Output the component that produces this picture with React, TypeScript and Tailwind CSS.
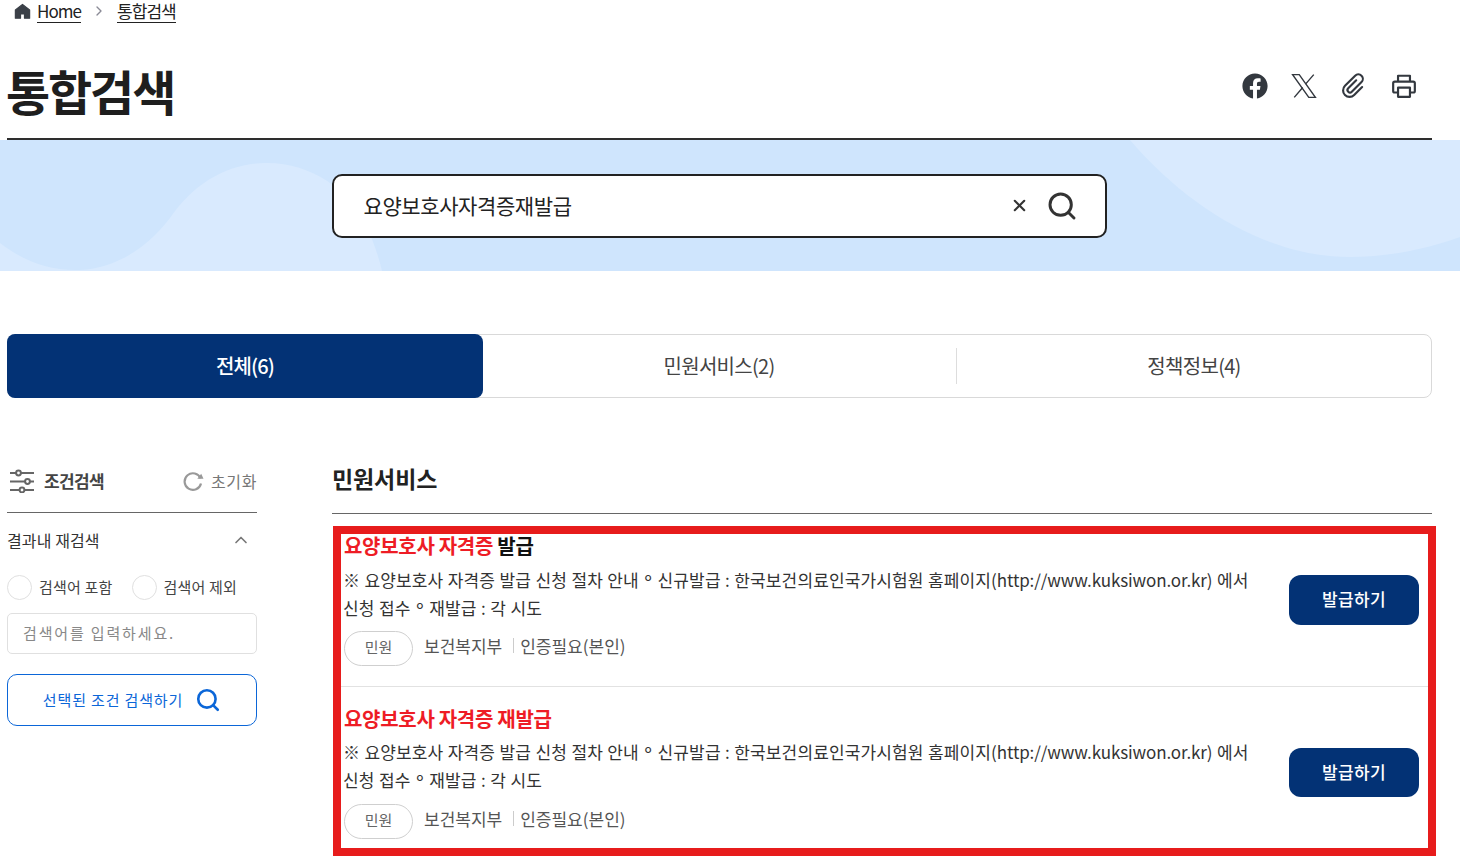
import React from "react";
import { ChevronRight, ChevronUp, Search, X } from "lucide-react";
import { FaFacebook } from "react-icons/fa";

const results = [
  { red: "요양보호사 자격증", dark: " 발급" },
  { red: "요양보호사 자격증 재발급", dark: "" },
];

function HomeIcon() {
  return (
    <svg viewBox="0 0 24 24" className="ml-[6px] mt-[2px] h-[19px] w-[19px] text-[#3b4048]" fill="currentColor" stroke="currentColor" strokeWidth="1.5" strokeLinejoin="round">
      <path d="M12 3L3 10V20.5H9.5V15H14.5V20.5H21V10Z" />
    </svg>
  );
}

function XLogo() {
  return (
    <svg viewBox="0 0 24 24" className="h-[26px] w-[26px]" fill="none" stroke="currentColor" strokeWidth="1.3" strokeLinejoin="miter">
      <path d="M1.5 1.5H7.6L22.5 22.5H16.4Z" />
      <path d="M21 1.5L13.4 10.3M10.8 13.4L3 22.5" />
    </svg>
  );
}

function ClipIcon() {
  return (
    <svg viewBox="0 0 24 24" className="mx-[-1px] h-[30px] w-[30px] rotate-45" fill="none" stroke="currentColor" strokeWidth="1.7" strokeLinecap="round">
      <path d="M10 7.5V16.5a2 2 0 0 0 4 0V5.5a3.6 3.6 0 0 0 -7.2 0V17a5.2 5.2 0 0 0 10.4 0V8" />
    </svg>
  );
}

function PrintIcon() {
  return (
    <svg viewBox="0 0 24 24" className="h-[26px] w-[26px]" fill="none" stroke="currentColor" strokeWidth="2" strokeLinejoin="round">
      <path d="M6.5 8V2.5H17.5V8" />
      <path d="M6.5 18H3.5A1.5 1.5 0 0 1 2 16.5V9.5A1.5 1.5 0 0 1 3.5 8H20.5A1.5 1.5 0 0 1 22 9.5V16.5A1.5 1.5 0 0 1 20.5 18H17.5" />
      <path d="M6.5 13.5H17.5V22H6.5Z" />
    </svg>
  );
}

function FilterIcon() {
  return (
    <svg viewBox="0 0 24 24" className="ml-[3px] h-[24px] w-[24px] text-[#666]" fill="none" stroke="currentColor" strokeWidth="2">
      <path d="M0 4H24M0 12.5H24M0 21H24" />
      <circle cx="8.5" cy="4" r="2.4" fill="white" />
      <circle cx="17.5" cy="12.5" r="2.4" fill="white" />
      <circle cx="12" cy="21" r="2.4" fill="white" />
    </svg>
  );
}

function ResetIcon() {
  return (
    <svg viewBox="0 0 22 22" className="mr-[7px] h-[22px] w-[22px]" fill="none">
      <path d="M18.6 8.4A8.3 8.3 0 1 0 19 13.5" stroke="#999999" strokeWidth="2.2" />
      <path d="M15.3 8.8L21.5 8.8L19.2 3.8Z" fill="#999999" />
    </svg>
  );
}

function Ring() {
  return <span className="mx-[1px] align-[-4px] text-[21px] leading-[0]">°</span>;
}

function ResultRow({ red, dark, last }: { red: string; dark: string; last?: boolean }) {
  return (
    <li className={`flex justify-between pl-[3px] pr-[9px] ${last ? "h-[158px]" : "h-[153px] border-b border-[#e2e2e2]"}`}>
      <div className="w-[908px]">
        <h3 className={`text-[20px] leading-[30px] font-bold tracking-[-0.3px] text-[#111] ${last ? "mt-[17px]" : "mt-[-3px]"}`}>
          <span className="text-[#ee1c25]">{red}</span>
          {dark}
        </h3>
        <div className={`ml-[-1px] text-[17px] leading-[28px] tracking-[0.12px] [word-spacing:0.5px] text-[#333] ${last ? "mt-[4px]" : "mt-[5px]"}`}>
          <p className="h-[28px] whitespace-nowrap">
            ※ 요양보호사 자격증 발급 신청 절차 안내 <Ring /> 신규발급 : 한국보건의료인국가시험원 홈페이지(
            <span className="tracking-[-0.12px]">http://www.kuksiwon.or.kr</span>) 에서
          </p>
          <p className="h-[28px] whitespace-nowrap">
            신청 접수 <Ring /> 재발급 : 각 시도
          </p>
        </div>
        <div className={`flex items-center ${last ? "mt-[10px]" : "mt-[9px]"}`}>
          <span className="flex h-[35px] w-[69px] items-center justify-center rounded-full border border-[#cfcfcf] pb-[2px] text-[15px] text-[#666]">민원</span>
          <div className="mb-[6px] flex items-center text-[17px] tracking-[0px] text-[#555]">
            <span className="ml-[11px]">보건복지부</span>
            <span className="ml-[11px] mr-[6px] h-[15px] w-px bg-[#cccccc]" />
            <span>인증필요(본인)</span>
          </div>
        </div>
      </div>
      <button className={`w-[130px] rounded-[12px] bg-[#033275] pb-[2px] text-[17px] font-medium tracking-[0.4px] text-white ${last ? "mt-[61px] h-[49px]" : "mt-[41px] h-[50px]"}`}>발급하기</button>
    </li>
  );
}

export default function App() {
  return (
    <div className="h-[857px] w-full overflow-hidden bg-white font-['Noto_Sans_CJK_KR','Noto_Sans',sans-serif] text-[#222]">
      <div className="mx-[7px] w-[1425px]">
        <nav className="flex h-[24px] items-start text-[17px] tracking-[-0.95px] text-[#222]">
          <HomeIcon />
          <a className="ml-[5px] border-b border-[#222] leading-[22px]">Home</a>
          <ChevronRight className="mx-[10px] mt-[3px] h-[16px] w-[16px] text-[#8a8a96]" />
          <a className="border-b border-[#222] leading-[22px]">통합검색</a>
        </nav>
        <div className="flex h-[116px] items-center justify-between border-b-2 border-[#2e2e2e] pt-[18px]">
          <h1 className="ml-[-1px] text-[48px] font-bold tracking-[-2.1px] text-[#1e1e1e]">통합검색</h1>
          <div className="mr-[15px] mb-[8px] flex items-center gap-[23px] text-[#33383f]">
            <FaFacebook className="h-[26px] w-[26px]" />
            <XLogo />
            <ClipIcon />
            <PrintIcon />
          </div>
        </div>
      </div>

      <section className="relative flex h-[131px] items-center justify-center overflow-hidden bg-[#cfe5fd] pr-[22px]">
        <svg className="absolute inset-0 h-full w-full" viewBox="0 0 1460 131" preserveAspectRatio="none">
          <path d="M0 103C25 122 50 131 80 130C115 128 145 110 170 78C195 42 228 24 265 23C310 22 350 50 366 85C374 103 379 118 382 131H0Z" fill="#d9eafe" />
          <path d="M1130 0C1190 70 1270 117 1350 117C1390 117 1430 108 1460 97V0Z" fill="#d9eafe" />
        </svg>
        <div className="relative flex h-[64px] w-[775px] items-center rounded-[10px] border-2 border-[#222] bg-white pl-[30px] pr-[27px]">
          <span className="flex-1 text-[21px] tracking-[-0.4px] text-[#222]">요양보호사자격증재발급</span>
          <X className="mr-[17px] h-[19px] w-[19px] text-[#333]" strokeWidth={2.6} />
          <Search className="h-[32px] w-[32px] text-[#333]" strokeWidth={2.2} />
        </div>
      </section>

      <div className="mx-[7px] w-[1425px]">
        <div className="mt-[63px] flex h-[64px] rounded-[8px] border border-[#d9d9d9] text-[20px] tracking-[-0.7px]">
          <div className="m-[-1px] flex w-[476px] items-center justify-center rounded-[8px] bg-[#033275] font-medium tracking-[-0.9px] text-white">전체(6)</div>
          <div className="flex flex-1 items-center justify-center text-[#444]">민원서비스(2)</div>
          <div className="my-[13px] w-px bg-[#dddddd]" />
          <div className="flex w-[474px] items-center justify-center text-[#444]">정책정보(4)</div>
        </div>

        <div className="mt-[62px] flex">
          <aside className="w-[250px]">
            <div className="flex h-[53px] items-center justify-between border-b border-[#666] pb-[11px]">
              <div className="flex items-center">
                <FilterIcon />
                <span className="ml-[10px] text-[17px] font-bold tracking-[-0.6px] text-[#444]">조건검색</span>
              </div>
              <div className="flex items-center text-[16px] tracking-[0.6px] text-[#777]">
                <ResetIcon />
                초기화
              </div>
            </div>
            <div className="mt-[14px] flex h-[26px] items-center justify-between text-[16px] tracking-[0.1px] text-[#333]">
              결과내 재검색
              <ChevronUp className="mr-[6px] h-[20px] w-[20px] text-[#777]" />
            </div>
            <div className="mt-[22px] flex items-center text-[15px] tracking-[0.2px] text-[#444]">
              <span className="h-[25px] w-[25px] rounded-full border border-[#e0e0e0]" />
              <span className="ml-[7px]">검색어 포함</span>
              <span className="ml-[19px] h-[25px] w-[25px] rounded-full border border-[#e0e0e0]" />
              <span className="ml-[7px]">검색어 제외</span>
            </div>
            <div className="mt-[13px] flex h-[41px] items-center rounded-[5px] border border-[#e0e0e0] pl-[15px] text-[15px] tracking-[1.85px] text-[#888]">검색어를 입력하세요.</div>
            <button className="mt-[20px] flex h-[52px] w-full items-center justify-center rounded-[10px] border border-[#0b66d8] text-[15px] tracking-[0.85px] text-[#0b66d8]">
              선택된 조건 검색하기
              <Search className="ml-[12px] h-[26px] w-[26px]" strokeWidth={2.4} />
            </button>
          </aside>

          <main className="ml-[75px] w-[1100px]">
            <h2 className="h-[54px] border-b border-[#666] pt-[2px] text-[23px] leading-[32px] font-bold tracking-[-0.1px] text-[#222]">민원서비스</h2>
            <ul className="mt-[12px] ml-[1px] h-[330px] w-[1103px] border-[8px] border-[#e71c1c]">
              <ResultRow red={results[0].red} dark={results[0].dark} />
              <ResultRow red={results[1].red} dark={results[1].dark} last />
            </ul>
          </main>
        </div>
      </div>
    </div>
  );
}
